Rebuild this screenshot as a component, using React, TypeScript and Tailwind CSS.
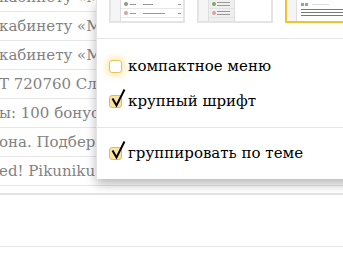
import React from "react";

const rows = [
  "кабинету «Мой МТС»",
  "кабинету «Мой МТС»",
  "кабинету «Мой МТС»",
  "Т 720760 Сложный",
  "ы: 100 бонусов",
  "она. Подберите",
  "ed! Pikuniku",
];

function Check({ checked, focused }: { checked?: boolean; focused?: boolean }) {
  return (
    <span
      className={
        "relative w-[13px] h-[13px] shrink-0 rounded-[3px] border " +
        (checked
          ? "bg-[#fbe3a2] border-[#d8bb62]"
          : "bg-white border-[#e6c460]") +
        (focused ? " shadow-[0_0_6px_3px_rgba(250,205,70,0.4)]" : "")
      }
    >
      {checked && (
        <svg
          className="absolute left-[-1px] top-[-8px] overflow-visible"
          width="18"
          height="20"
          viewBox="0 0 18 20"
        >
          <path d="M3.5 10.5 L7.5 17.5 L15.5 1.5" fill="none" stroke="#000" strokeWidth="2" strokeLinejoin="miter" />
        </svg>
      )}
    </span>
  );
}

function Option({ label, checked, focused }: { label: string; checked?: boolean; focused?: boolean }) {
  return (
    <div className="h-[35px] flex items-center gap-[6px]">
      <Check checked={checked} focused={focused} />
      <span className="text-[15px] text-black whitespace-nowrap">{label}</span>
    </div>
  );
}

function ThumbList() {
  return (
    <div className="w-[76px] h-[23px] shrink-0 flex border-x-2 border-b-2 border-[#e4e4e4] bg-white">
      <div className="w-[10px] bg-[#f5f5f5] border-r border-[#dedede]" />
      <div className="flex-1 flex flex-col">
        {["#7fa56d", "#d7a3a3"].map((c, i) => (
          <div key={i} className="h-[9px] border-b border-[#e8e8e8] flex items-center pl-[3px]">
            <span className="w-[4px] h-[4px] rounded-full" style={{ background: c }} />
            <span className="ml-[2px] w-[6px] h-px bg-[#999]" />
            <span className={"ml-[7px] h-px bg-[#999] " + (i === 0 ? "w-[10px]" : "w-[22px]")} />
            <span className={"h-px w-[3px] bg-[#999] " + (i === 0 ? "ml-[25px]" : "ml-[13px]")} />
          </div>
        ))}
      </div>
    </div>
  );
}

function ThumbSplit() {
  return (
    <div className="w-[76px] h-[23px] shrink-0 flex border-x-2 border-b-2 border-[#e4e4e4] bg-white">
      <div className="w-[10px] bg-[#f5f5f5] border-r border-[#dedede]" />
      <div className="w-[26px] bg-[#efefef] border-r border-[#dedede] flex flex-col">
        {["#7fa56d", "#d7a3a3"].map((c, i) => (
          <div key={i} className="h-[9px] border-b border-[#e2e2e2] flex items-center pl-[3px]">
            <span className="w-[4px] h-[4px] rounded-full" style={{ background: c }} />
            <span className="ml-[1px] flex flex-col gap-[2px]">
              <span className="w-[13px] h-px bg-[#999]" />
              <span className="w-[13px] h-px bg-[#999]" />
            </span>
          </div>
        ))}
      </div>
      <div className="flex-1" />
    </div>
  );
}

function ThumbFull() {
  return (
    <div className="w-[76px] h-[23px] shrink-0 flex border-x-2 border-b-2 border-[#f2c22c] bg-white">
      <div className="w-[10px] bg-[#f5f5f5] border-r border-[#dedede]" />
      <div className="flex-1 pl-[4px] pt-[3px] flex flex-col">
        <div className="flex items-center gap-[1px] h-[3px]">
          <span className="w-[3px] h-[3px] bg-[#8e9fcb]" />
          <span className="w-[3px] h-[3px] bg-[#8e9fcb]" />
          <span className="ml-[3px] w-[17px] h-px bg-[#dcdcdc]" />
        </div>
        <div className="mt-[3px] flex flex-col gap-[2px]">
          <span className="w-[42px] h-px bg-[#777]" />
          <span className="w-[42px] h-px bg-[#777]" />
          <span className="w-[42px] h-px bg-[#777]" />
        </div>
      </div>
    </div>
  );
}

export default function App() {
  return (
    <div className="relative w-[343px] h-[265px] overflow-hidden bg-white font-['DejaVu_Serif',serif]">
      <div className="-mt-[17px]">
        {rows.map((t, i) => (
          <div
            key={i}
            className="h-[29px] border-b border-[#e6e6e6] flex items-center whitespace-nowrap text-[15px] text-[#828282] -ml-[1px]"
          >
            {t}
          </div>
        ))}
      </div>
      <div className="h-[7px]" />
      <div className="h-[2px] bg-[#e3e3e3]" />
      <div className="h-[52px] border-b border-[#e6e6e6]" />
      <div className="flex justify-end pr-[17px] pt-[13px]">
        <span className="font-['DejaVu_Sans',sans-serif] text-[13px] text-[#9a9a9a]">12:12</span>
      </div>

      <div className="absolute top-0 left-[96px] w-[260px] h-[179px] bg-white border-l border-[#e2e2e2] shadow-[0_5px_10px_rgba(0,0,0,0.28)] overflow-hidden">
        <div className="h-[39px] border-b border-[#e5e5e5]">
          <div className="flex gap-[12px] pl-[12px]">
            <ThumbList />
            <ThumbSplit />
            <ThumbFull />
          </div>
        </div>
        <div className="pl-[12px] pt-[10px] pb-[8px] border-b border-[#e5e5e5]">
          <Option label="компактное меню" focused />
          <Option label="крупный шрифт" checked />
        </div>
        <div className="pl-[12px] pt-[8px]">
          <Option label="группировать по теме" checked />
        </div>
      </div>
    </div>
  );
}
